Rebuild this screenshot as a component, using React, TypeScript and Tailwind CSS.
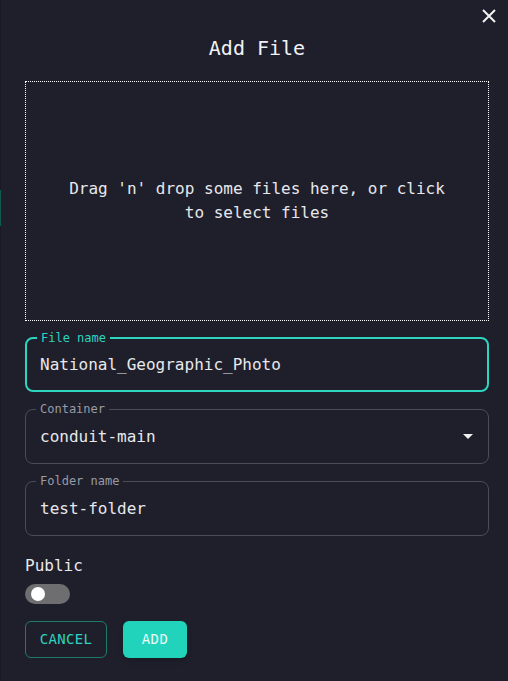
import React from "react";

const mono = { fontFamily: '"DejaVu Sans Mono", "Liberation Mono", monospace' };

interface FieldProps {
  label: string;
  value: string;
  focused?: boolean;
  select?: boolean;
}

const Field: React.FC<FieldProps> = ({ label, value, focused, select }) => (
  <div
    className={`relative flex h-[55px] items-center rounded-lg px-[14px] ${
      focused ? "border-2 border-[#2dd4bf]" : "border border-[#4b4c57]"
    }`}
  >
    <span
      className={`absolute left-[10px] top-[-9px] bg-[#1e1f2b] px-[4px] text-[12px] leading-[16px] ${
        focused ? "text-[#2dd4bf]" : "text-[#9a9ba5]"
      }`}
    >
      {label}
    </span>
    <span className={`flex-1 text-[16px] text-[#e8e8ec] ${focused ? "ml-[-1px]" : ""}`}>{value}</span>
    {select && (
      <svg width="10" height="6" viewBox="0 0 10 6" className="mr-[1px]">
        <path d="M0 0 L10 0 L5 5 Z" fill="#f0f0f0" />
      </svg>
    )}
  </div>
);

export default function App() {
  return (
    <div className="flex h-[681px] w-[508px] bg-[#1e1f2b]" style={mono}>
      {/* left edge of page behind */}
      <div className="flex w-px flex-col bg-[#181922]">
        <div className="mt-[190px] h-[36px] w-full bg-[#0f5c4c]" />
      </div>
      <div className="relative flex flex-1 flex-col pl-[24px] pr-[19px]">
        <button className="absolute right-[12px] top-[9px] text-white">
          <svg width="14" height="14" viewBox="0 0 14 14">
            <path d="M1 1 L13 13 M13 1 L1 13" stroke="#f2f2f2" strokeWidth="2" />
          </svg>
        </button>
        <h2 className="mt-[36px] text-center text-[20px] leading-[24px] text-[#f2f2f5]">Add File</h2>
        <div className="mt-[21px] flex h-[240px] items-center justify-center border border-dotted border-white px-[40px] text-center text-[16px] leading-[24px] text-[#e8e8ec]">
          Drag 'n' drop some files here, or click to select files
        </div>
        <div className="mt-[16px] flex flex-col gap-[17px]">
          <Field label="File name" value="National_Geographic_Photo" focused />
          <Field label="Container" value="conduit-main" select />
          <Field label="Folder name" value="test-folder" />
        </div>
        <div className="mt-[20px] text-[16px] leading-[20px] text-[#e8e8ec]">Public</div>
        <div className="mt-[8px] flex h-[20px] w-[45px] items-center rounded-full bg-[#6e6e70] px-[6px]">
          <div className="h-[14px] w-[14px] rounded-full bg-white" />
        </div>
        <div className="mt-[17px] flex gap-[16px]">
          <button className="h-[37px] w-[82px] rounded-md border border-[#1f7a6c] text-[14px] tracking-wide text-[#2dd4bf]">
            CANCEL
          </button>
          <button className="h-[37px] w-[64px] rounded-md bg-[#22d3bb] text-[14px] tracking-wide text-[#eafaf6] shadow-md">
            ADD
          </button>
        </div>
      </div>
    </div>
  );
}
